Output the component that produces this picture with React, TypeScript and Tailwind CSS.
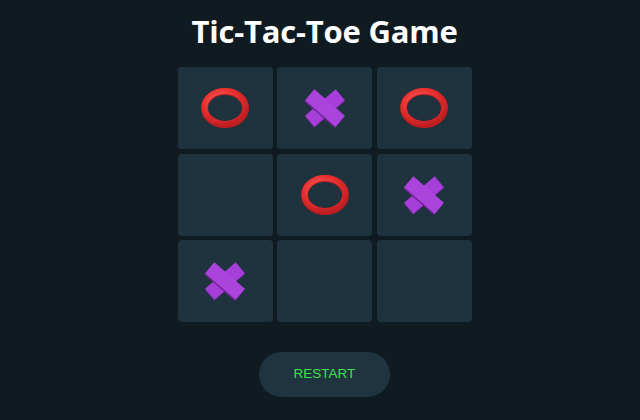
import React from "react";

const O = () => (
  <svg width="48" height="40" viewBox="0 0 48 40">
    <defs>
      <radialGradient id="og" cx="40%" cy="35%" r="70%">
        <stop offset="0%" stopColor="#ff6b6b" />
        <stop offset="60%" stopColor="#e8302f" />
        <stop offset="100%" stopColor="#c01f22" />
      </radialGradient>
    </defs>
    <ellipse cx="24" cy="20" rx="20.5" ry="16.5" fill="none" stroke="#b51c1f" strokeWidth="7" />
    <ellipse cx="24" cy="19.5" rx="20.5" ry="16.5" fill="none" stroke="url(#og)" strokeWidth="6" />
  </svg>
);

const X = () => (
  <svg width="48" height="42" viewBox="0 0 44 38" preserveAspectRatio="none">
    <polygon points="31.77,3.07 3.77,27.07 12.23,36.93 40.23,12.93" fill="#6a2390" />
    <polygon points="31.77,2.07 3.77,26.07 12.23,35.93 40.23,11.93" fill="#a63fd9" />
    <polygon points="11.5,3.27 39.5,27.27 31.07,37.13 3.07,13.13" fill="#6e2496" />
    <polygon points="12.23,2.07 40.23,26.07 31.77,35.93 3.77,11.93" fill="#ab44dd" />
  </svg>
);

const board: (string | null)[] = ["O", "X", "O", null, "O", "X", "X", null, null];

export default function App() {
  return (
    <div
      className="w-[640px] h-[420px] bg-[#101a21] flex flex-col items-center overflow-hidden pl-[9px]"
      style={{ fontFamily: '"Open Sans", "Noto Sans", sans-serif' }}
    >
      <h1 className="mt-[16px] text-[31px] leading-none font-bold text-white tracking-[-0.2px]">
        Tic-Tac-Toe Game
      </h1>
      <div className="mt-[20px] grid grid-cols-3 gap-[4.5px] w-[294px]">
        {board.map((c, i) => (
          <div
            key={i}
            className="h-[82px] rounded-[4px] bg-[#1f333e] flex items-center justify-center"
          >
            {c === "O" ? <O /> : c === "X" ? <X /> : null}
          </div>
        ))}
      </div>
      <button
        className="mt-[30px] w-[131px] h-[45px] rounded-full bg-[#1f343f] text-[#3fe04f] text-[13.5px]"
        style={{ fontFamily: '"Liberation Sans", Arial, sans-serif' }}
      >
        RESTART
      </button>
    </div>
  );
}
